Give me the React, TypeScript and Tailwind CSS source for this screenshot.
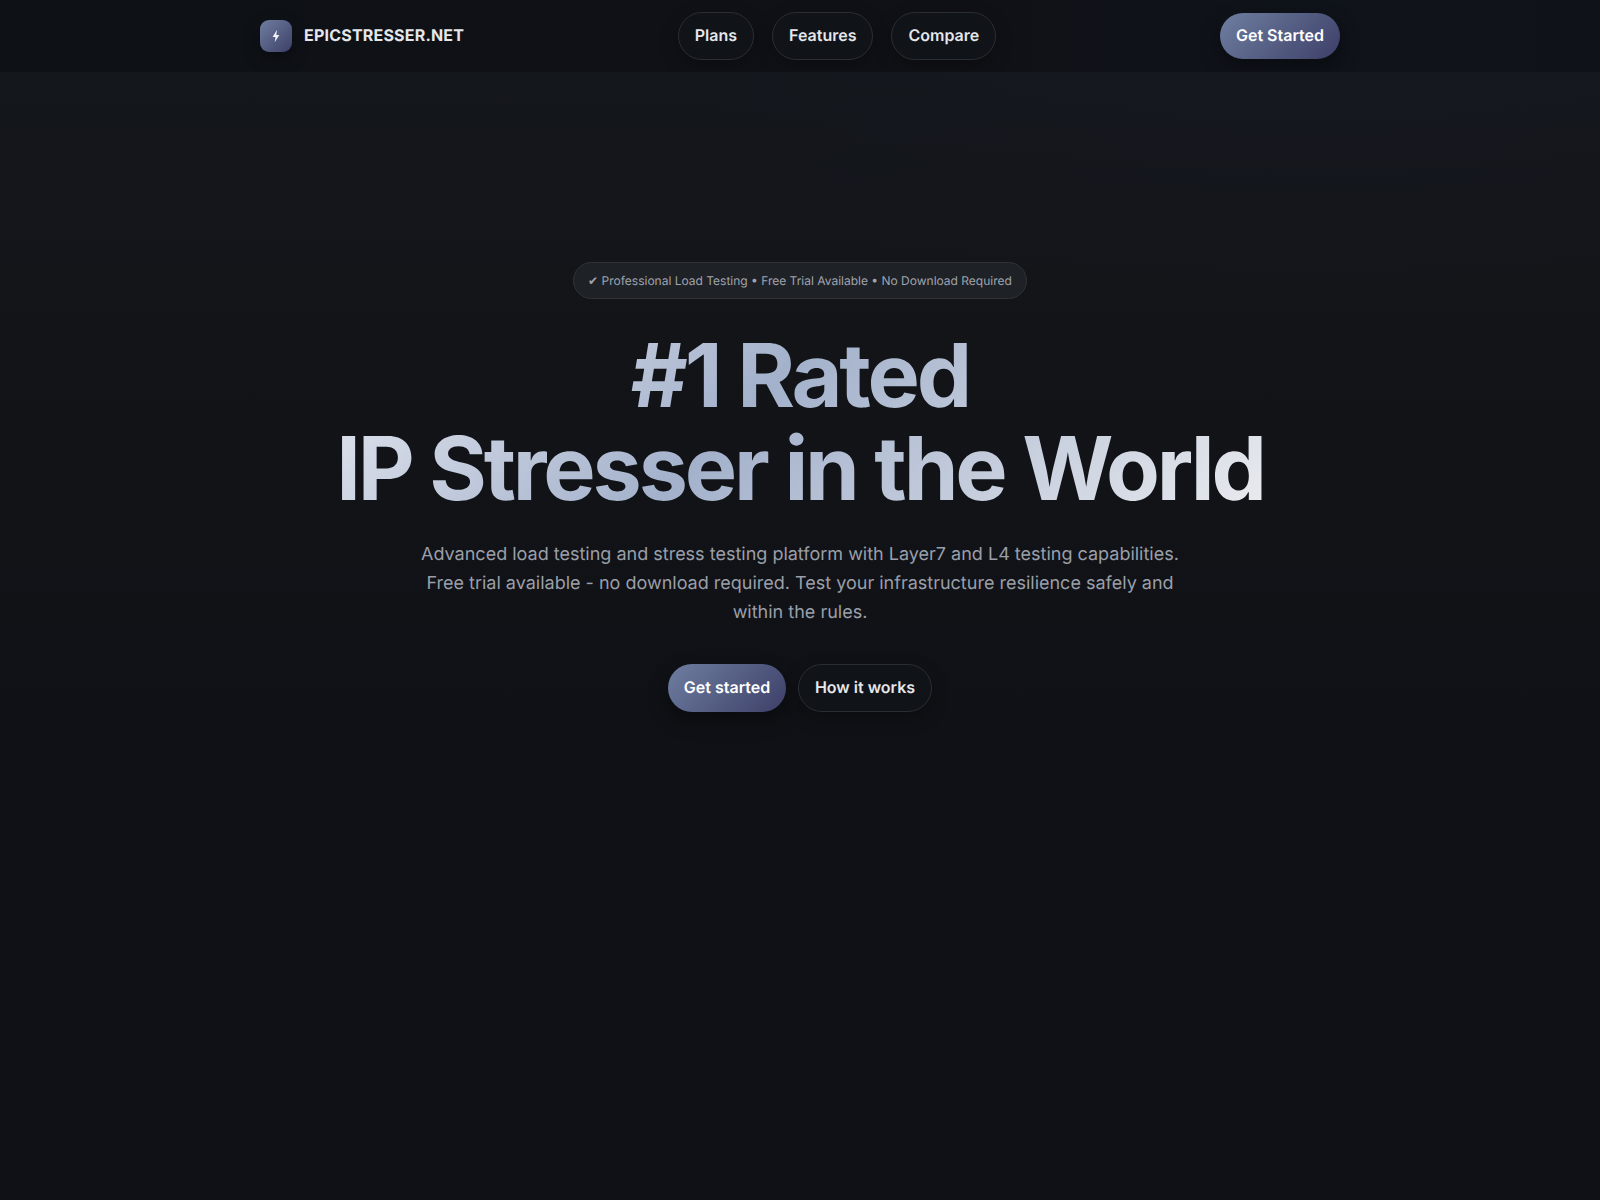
import React from "react";

const font = { fontFamily: "Inter, 'Liberation Sans', 'DejaVu Sans', sans-serif" };

function Bolt() {
  return (
    <svg width="12" height="14" viewBox="0 0 12 14" fill="#f1f3f7">
      <path d="M7 0.8 2.6 7.9h2.9L4.7 13.2 9.3 5.9H6.3z" />
    </svg>
  );
}

function NavPill({ label }: { label: string }) {
  return (
    <a className="h-[48px] flex items-center px-[16px] pb-[2px] rounded-full border border-[#2a2d33] bg-[#101318] text-[16px] leading-none font-semibold text-[#e5e7eb] shadow-[0_6px_18px_rgba(0,0,0,0.25)]">
      {label}
    </a>
  );
}

export default function App() {
  return (
    <div style={font} className="min-h-[1200px] bg-[#0f1116] text-white flex flex-col [text-rendering:geometricPrecision]">
      <header className="h-[72px] shrink-0 bg-[linear-gradient(90deg,#0e1116_0%,#0f1116_60%,#0f131a_80%,#0f1219_100%)] flex justify-center">
        <div className="w-[1080px] flex items-center justify-between">
          <div className="w-[194px] flex items-center gap-3">
            <div className="w-8 h-8 shrink-0 rounded-[9px] bg-[linear-gradient(135deg,#6e7ea0,#3d3f68)] flex items-center justify-center shadow-[0_6px_16px_rgba(0,0,0,0.35)]">
              <Bolt />
            </div>
            <span className="text-[16px] pb-[2px] font-bold tracking-[0.2px] text-[#e5e7eb] whitespace-nowrap">EPICSTRESSER.NET</span>
          </div>
          <nav className="flex items-center gap-[18px]">
            <NavPill label="Plans" />
            <NavPill label="Features" />
            <NavPill label="Compare" />
          </nav>
          <a className="w-[120px] h-[46px] pb-[2px] flex items-center justify-center rounded-full bg-[linear-gradient(135deg,#6e7ea0,#3d3f68)] text-[16px] font-semibold text-white shadow-[0_8px_20px_rgba(0,0,0,0.4)]">
            Get Started
          </a>
        </div>
      </header>

      <main className="grow flex flex-col items-center pt-[190px] bg-[radial-gradient(ellipse_650px_230px_at_82%_0%,rgba(26,32,46,0.18),transparent_100%),linear-gradient(180deg,#14171c_0%,#121418_25%,#0f1116_60%,#0f1116_100%)]">
        <div className="h-[37px] flex items-center px-[14px] rounded-full border border-[#2f3237] bg-[#1e2126] text-[12px] text-[#a0a4ae] whitespace-nowrap">
          <span style={{ fontFamily: "'DejaVu Sans', sans-serif" }}>✔</span>&nbsp;Professional Load Testing • Free Trial Available • No Download Required
        </div>

        <h1 className="mt-[31px] text-center text-[88px] leading-[93px] font-[750] tracking-[-0.036em] whitespace-nowrap bg-[linear-gradient(135deg,#e8ebf2_0%,#a3b1cb_44%,#e9ebef_100%)] bg-clip-text text-transparent">
          #1 Rated
          <br />
          IP Stresser in the World
        </h1>

        <p className="mt-[24px] w-[780px] text-center text-[18px] leading-[29px] text-[#9a9fa9]">
          Advanced load testing and stress testing platform with Layer7 and L4 testing capabilities.
          <br />
          Free trial available - no download required. Test your infrastructure resilience safely and
          <br />
          within the rules.
        </p>

        <div className="mt-[37px] flex items-center gap-3">
          <a className="w-[118px] h-[48px] pb-[2px] flex items-center justify-center rounded-full bg-[linear-gradient(135deg,#6e7ea0,#3d3f68)] text-[16px] font-semibold text-white shadow-[0_8px_20px_rgba(0,0,0,0.4)]">
            Get started
          </a>
          <a className="w-[134px] h-[48px] pb-[2px] flex items-center justify-center rounded-full border border-[#2a2d33] bg-[#101318] text-[16px] font-semibold text-[#e5e7eb] shadow-[0_6px_18px_rgba(0,0,0,0.25)]">
            How it works
          </a>
        </div>
      </main>
    </div>
  );
}
